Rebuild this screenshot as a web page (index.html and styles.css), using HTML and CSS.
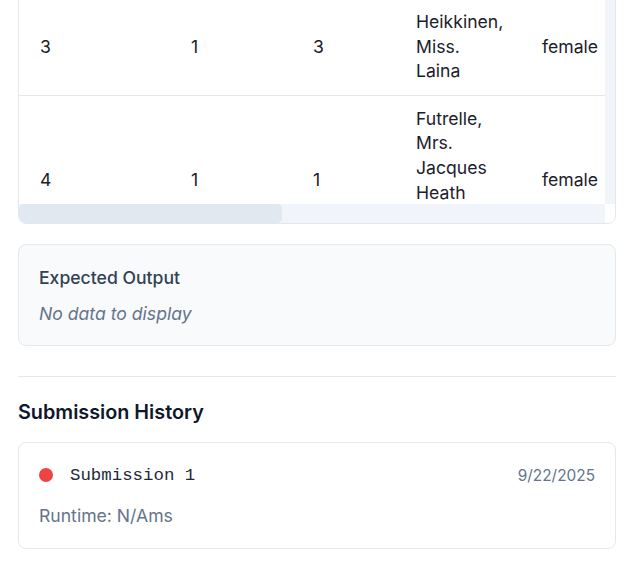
FILE: index.html
```html
<!DOCTYPE html>
<html lang="en">
<head>
<meta charset="utf-8">
<title>Submission</title>
<link rel="stylesheet" href="styles.css">
</head>
<body>
<main class="page">
  <h3 class="section-title">Your Output</h3>
  <div class="table-card">
    <div class="table-viewport">
      <table class="data-table">
        <colgroup>
          <col class="c-id"><col class="c-surv"><col class="c-class"><col class="c-name"><col class="c-sex">
          <col class="c-age"><col class="c-sib"><col class="c-parch"><col class="c-ticket"><col class="c-fare"><col class="c-cabin"><col class="c-emb">
        </colgroup>
        <thead>
          <tr><th>PassengerId</th><th>Survived</th><th>Pclass</th><th>Name</th><th>Sex</th><th>Age</th><th>SibSp</th><th>Parch</th><th>Ticket</th><th>Fare</th><th>Cabin</th><th>Embarked</th></tr>
        </thead>
        <tbody>
          <tr><td>1</td><td>0</td><td>3</td><td>Braund, Mr. Owen Harris</td><td>male</td><td>22</td><td>1</td><td>0</td><td>A/5 21171</td><td>7.25</td><td></td><td>S</td></tr>
          <tr><td>2</td><td>1</td><td>1</td><td>Cumings, Mrs. John Bradley (Florence Briggs Thayer)</td><td>female</td><td>38</td><td>1</td><td>0</td><td>PC 17599</td><td>71.2833</td><td>C85</td><td>C</td></tr>
          <tr><td>3</td><td>1</td><td>3</td><td>Heikkinen, Miss. Laina</td><td>female</td><td>26</td><td>0</td><td>0</td><td>STON/O2. 3101282</td><td>7.925</td><td></td><td>S</td></tr>
          <tr><td>4</td><td>1</td><td>1</td><td>Futrelle, Mrs. Jacques Heath (Lily May Peel)</td><td>female</td><td>35</td><td>1</td><td>0</td><td>113803</td><td>53.1</td><td>C123</td><td>S</td></tr>
          <tr><td>5</td><td>0</td><td>3</td><td>Allen, Mr. William Henry</td><td>male</td><td>35</td><td>0</td><td>0</td><td>373450</td><td>8.05</td><td></td><td>S</td></tr>
        </tbody>
      </table>
    </div>
    <div class="vbar"><div class="vthumb"></div></div>
    <div class="hbar"><div class="hthumb"></div></div>
    <div class="corner"></div>
  </div>

  <section class="expected" id="expected">
    <h4 class="expected-title">Expected Output</h4>
    <p class="empty">No data to display</p>
  </section>

  <section class="history">
    <h3 class="history-title">Submission History</h3>
    <div class="submission">
      <div class="submission-head">
        <div class="submission-name">
          <span class="status-dot"></span>
          <span class="mono">Submission 1</span>
        </div>
        <span class="date">9/22/2025</span>
      </div>
      <p class="runtime">Runtime: N/Ams</p>
    </div>
  </section>
</main>
<script src="script.js"></script>
</body>
</html>
```

FILE: styles.css
```css
html {
  overflow: hidden;
}
body {
  margin: 0;
  background: #ffffff;
  font-family: Inter, "Noto Sans", "Liberation Sans", sans-serif;
  color: #1e293b;
}
.page {
  padding: 24px 11px 60px 18px;
}
.section-title {
  margin: 0 0 16px;
  font-size: 19.8px;
  line-height: 28px;
  font-weight: 600;
  color: #0f172a;
}
.table-card {
  display: grid;
  grid-template-columns: 1fr 10px;
  grid-template-rows: 520px 19px;
  border: 1px solid #e2e8f0;
  border-radius: 8px;
  overflow: hidden;
  background: #fff;
}
.table-viewport {
  overflow: hidden;
  min-width: 0;
}
.vbar {
  background: #f1f5f9;
}
.vthumb {
  height: 200px;
  background: #e2e8f0;
  border-radius: 5px;
}
.hbar {
  background: #f1f5f9;
}
.hthumb {
  width: 263px;
  height: 100%;
  background: #e2e8f0;
  border-radius: 5px;
}
.corner {
  background: #ffffff;
}
.data-table {
  table-layout: fixed;
  width: 1300px;
  border-collapse: separate;
  border-spacing: 0;
  font-size: 17.6px;
  line-height: 24.6px;
}
.c-id { width: 151px; }
.c-surv { width: 122px; }
.c-class { width: 103px; }
.c-name { width: 126px; }
.c-sex { width: 94px; }
.c-age { width: 90px; }
.c-sib { width: 95px; }
.c-parch { width: 95px; }
.c-ticket { width: 130px; }
.c-fare { width: 100px; }
.c-cabin { width: 95px; }
.c-emb { width: 99px; }
.data-table th,
.data-table td {
  padding: 11px 21px;
  text-align: left;
  vertical-align: middle;
  border-bottom: 1px solid #e5e7eb;
}
.data-table th {
  background: #f8fafc;
  font-weight: 600;
  color: #334155;
}
.data-table td {
  color: #1a202c;
}
.expected {
  margin-top: 20px;
  background: #f8fafc;
  border: 1px solid #e2e8f0;
  border-radius: 8px;
  padding: 21px 20px 19px;
}
.expected-title {
  margin: 0 0 11px;
  font-size: 17.6px;
  line-height: 24.6px;
  font-weight: 500;
  color: #334155;
}
.empty {
  margin: 0;
  font-size: 17.6px;
  line-height: 24.6px;
  font-style: italic;
  color: #64748b;
}
.history {
  margin-top: 30px;
  border-top: 1px solid #e2e8f0;
  padding-top: 21px;
}
.history-title {
  margin: 0 0 16px;
  font-size: 19.8px;
  line-height: 28px;
  font-weight: 600;
  color: #0f172a;
}
.submission {
  border: 1px solid #e2e8f0;
  border-radius: 8px;
  padding: 18px 20px 20px;
  background: #fff;
}
.submission-head {
  display: flex;
  align-items: center;
  justify-content: space-between;
  height: 28px;
}
.submission-name {
  display: flex;
  align-items: center;
}
.status-dot {
  width: 14px;
  height: 14px;
  border-radius: 50%;
  background: #ef4444;
  margin-right: 17px;
}
.mono {
  font-family: "Liberation Mono", "DejaVu Sans Mono", monospace;
  font-size: 17.4px;
  color: #1e293b;
}
.date {
  font-size: 15.4px;
  color: #64748b;
}
.runtime {
  margin: 14.7px 0 0;
  font-size: 17.6px;
  line-height: 24.6px;
  color: #64748b;
}
```

FILE: script.js
```js
(function () {
  var target = document.getElementById('expected');
  var top = target.getBoundingClientRect().top + window.scrollY - 244;
  window.scrollTo(0, top);
})();
```
